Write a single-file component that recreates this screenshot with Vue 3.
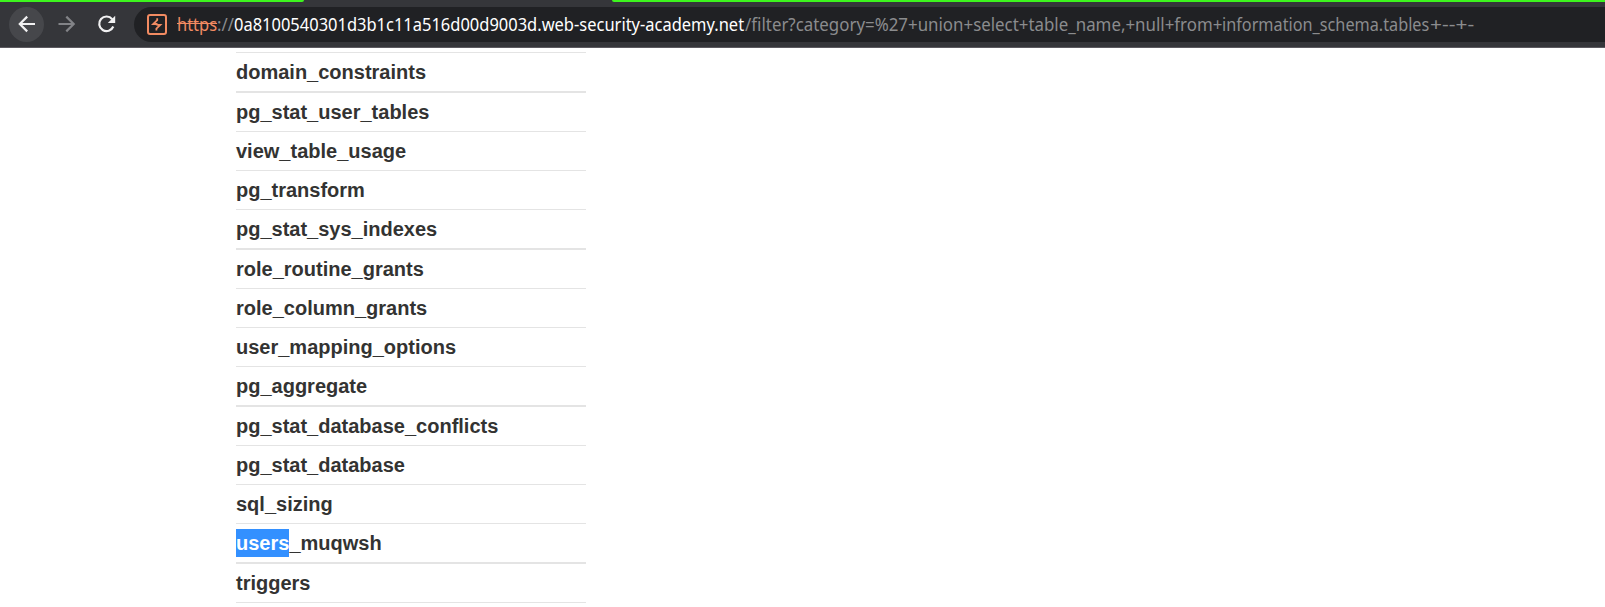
<script setup>
const rows = [
  { name: 'domain_constraints', thick: true },
  { name: 'pg_stat_user_tables' },
  { name: 'view_table_usage' },
  { name: 'pg_transform' },
  { name: 'pg_stat_sys_indexes', thick: true },
  { name: 'role_routine_grants' },
  { name: 'role_column_grants' },
  { name: 'user_mapping_options' },
  { name: 'pg_aggregate', thick: true },
  { name: 'pg_stat_database_conflicts' },
  { name: 'pg_stat_database' },
  { name: 'sql_sizing' },
  { selected: 'users', name: '_muqwsh', thick: true },
  { name: 'triggers' },
]
</script>

<template>
  <div class="window">
    <header class="toolbar">
      <div class="tabline"><i class="left"></i><i class="right"></i></div>
      <div class="bar">
        <button class="btn back" aria-label="Back">
          <svg width="36" height="36" viewBox="0 0 36 36" fill="none" stroke="#f1f1f2" stroke-width="2.2"><path d="M26 17H11.5M18.2 9.6L10.8 17l7.4 7.4" /></svg>
        </button>
        <button class="btn forward" aria-label="Forward">
          <svg width="36" height="36" viewBox="0 0 36 36" fill="none" stroke="#828387" stroke-width="2.2"><path d="M9.5 17h14.5M17.3 9.6l7.4 7.4-7.4 7.4" /></svg>
        </button>
        <button class="btn reload" aria-label="Reload">
          <svg width="36" height="36" viewBox="0 0 36 36"><path d="M23.2 12.2A7.3 7.3 0 1 0 24.3 19.5" fill="none" stroke="#f1f1f2" stroke-width="2.2" /><path d="M26.2 8.8V16h-7.4z" fill="#f1f1f2" /></svg>
        </button>
        <div class="omnibox">
          <svg class="logo" width="20" height="21" viewBox="0 0 20 21"><rect x="1" y="1" width="18" height="19" rx="2" fill="none" stroke="#f28b62" stroke-width="2" /><path d="M10.2 4.3V6.2L6.2 10H9.6V11.2M9.4 16.4V14.6L13.3 10.9H9.6" fill="none" stroke="#f28b62" stroke-width="1.8" /></svg>
          <div class="url"><span class="scheme">https</span><span class="sep">://</span><span class="host">0a8100540301d3b1c11a516d00d9003d.web-security-academy.net</span><span class="path">/filter?category=%27+union+select+table_name,+null+from+</span><span class="schema">information_schema.tables</span><span class="tail">+--+-</span></div>
        </div>
      </div>
    </header>
    <main class="page">
      <table class="results">
        <tbody>
          <tr v-for="row in rows" :key="row.name">
            <th :class="{ thick: row.thick }"><div class="cell"><mark v-if="row.selected">{{ row.selected }}</mark>{{ row.name }}</div></th>
          </tr>
        </tbody>
      </table>
    </main>
  </div>
</template>

<style>
body { margin: 0; background: #fff; overflow: hidden; }
</style>

<style scoped>
.window { height: 607px; overflow: hidden; background: #fff; }
.toolbar { box-sizing: border-box; height: 48px; background: #35363a; border-bottom: 1px solid #5c5a60; overflow: hidden; }
.tabline { display: flex; justify-content: space-between; height: 2px; }
.tabline i { background: #3df51e; height: 2px; }
.left { width: 304px; border-bottom-right-radius: 2px; }
.right { width: 993px; border-bottom-left-radius: 2px; }
.bar { display: flex; align-items: center; height: 35px; margin-top: 5px; }
.btn { flex: none; width: 35px; height: 35px; padding: 0; border: 0; border-radius: 50%; background: none; }
.btn svg { display: block; }
.back { margin-left: 9px; background: #46474b; }
.forward { margin-left: 5px; }
.reload { margin-left: 5px; }
.omnibox { flex: 1; display: flex; align-items: center; height: 35px; margin-left: 10px; border-radius: 17.5px 0 0 17.5px; background: #202124; overflow: hidden; }
.logo { flex: none; margin-left: 13px; }
.url { display: flex; margin-left: 10px; padding-bottom: 2px; font: 18.5px/26px "Noto Sans", sans-serif; white-space: pre; color: #8b8c8e; }
.url span { flex: none; transform-origin: 0 50%; }
.scheme { width: 40px; color: #f28b62; text-decoration: line-through; transform: scaleX(0.89); }
.sep { width: 17px; transform: scaleX(0.9); }
.host { width: 511px; color: #fff; transform: scaleX(0.8905); }
.path { width: 477px; transform: scaleX(0.912); }
.schema { width: 208px; transform: scaleX(0.878); }
.tail { transform: scaleX(1.13); }
.results { border-collapse: separate; border-spacing: 0; width: 350px; margin: 4px 0 0 236px; border-top: 1px solid #e4e4e4; }
th { padding: 5px 0; border-bottom: 1px solid #e4e4e4; text-align: left; font: bold 20px/28px "Liberation Sans", Arial, sans-serif; color: #333332; }
th.thick { border-bottom-width: 2px; }
.cell { height: 28px; white-space: pre; }
mark { display: inline-block; height: 28px; background: #3390ff; color: #fff; }
</style>
